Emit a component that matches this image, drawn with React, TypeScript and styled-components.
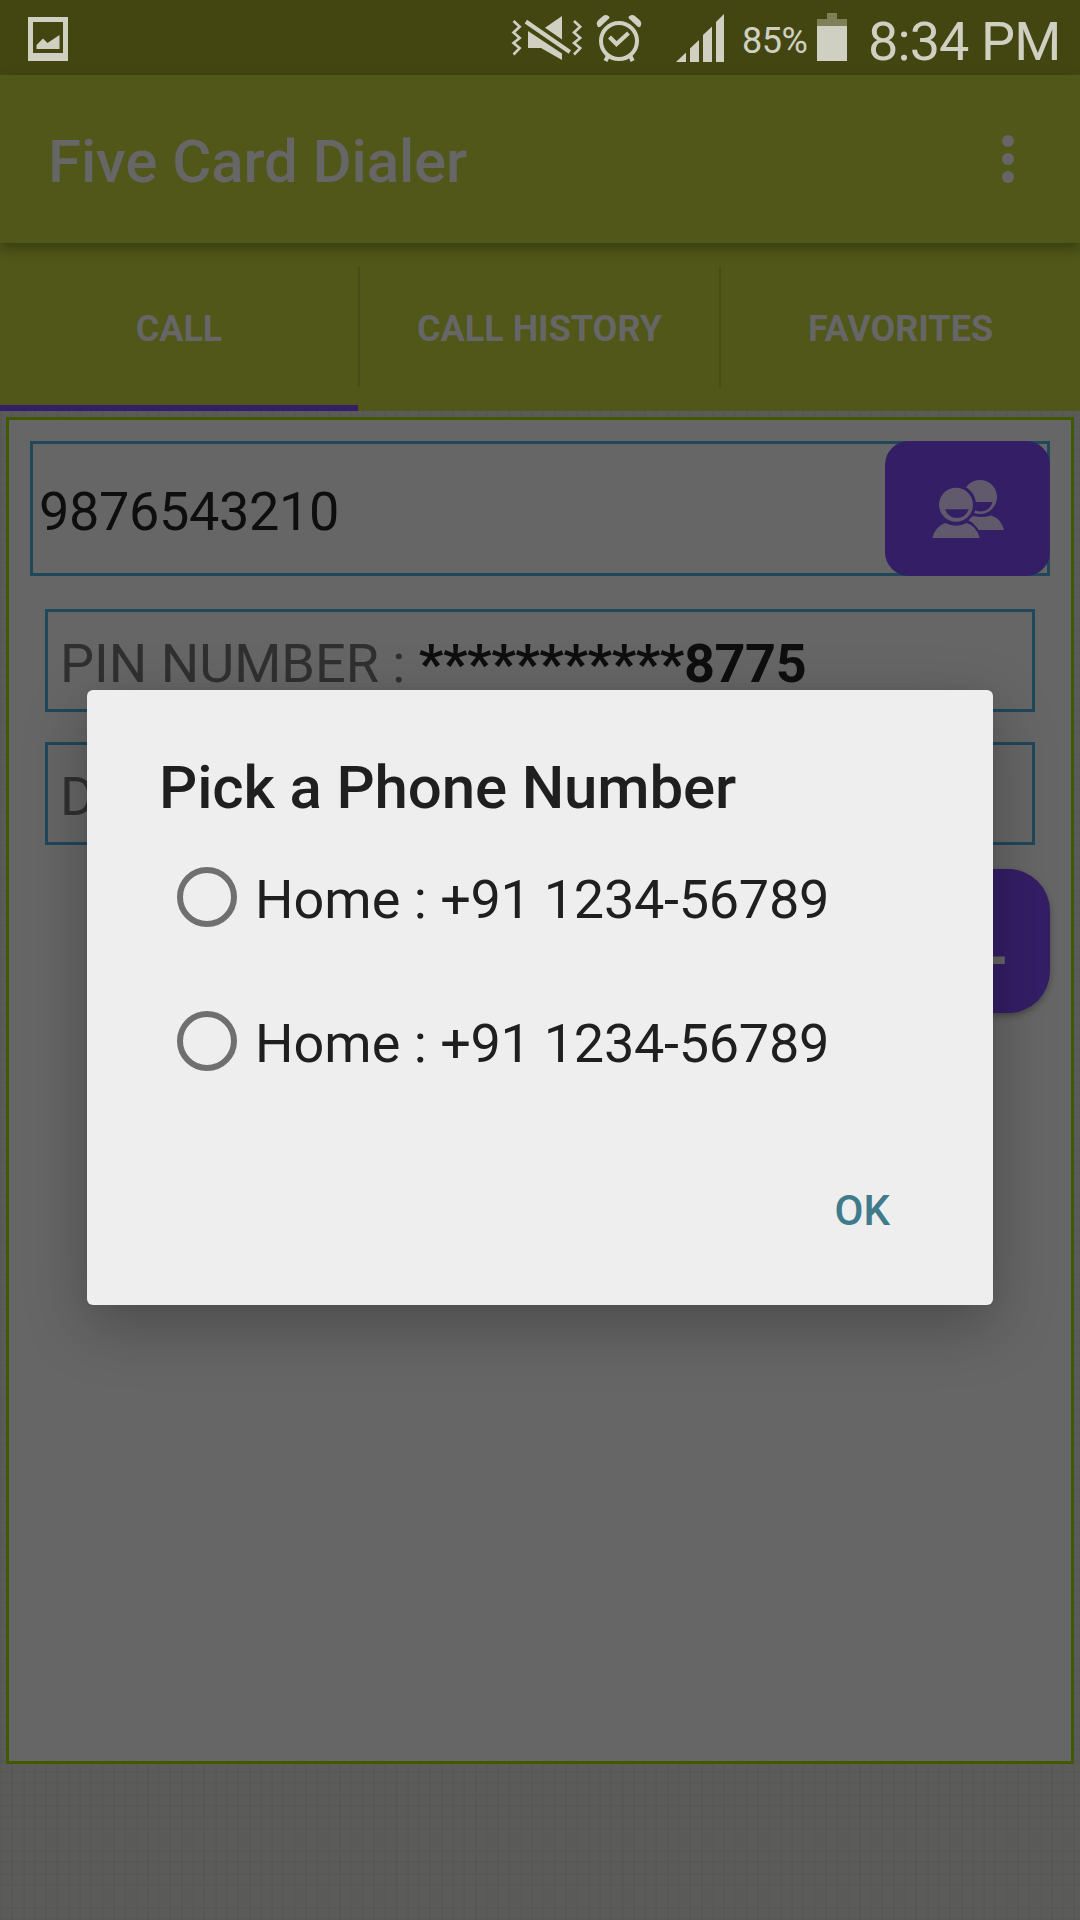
import React from "react";
import styled, { createGlobalStyle } from "styled-components";

const GlobalStyle = createGlobalStyle`
  * { box-sizing: border-box; }
  body { margin: 0; background: #5a5a58; }
`;

const ICON = "#cfcfc2";
const MUTED = "#666666";
const OLIVE = "#505718";
const PURPLE = "#341e66";

const Screen = styled.div`
  position: relative;
  width: 1080px;
  height: 1920px;
  overflow: hidden;
  display: flex;
  flex-direction: column;
  font-family: Roboto, "Noto Sans", sans-serif;
  background-color: #5b5b59;
  background-image:
    repeating-linear-gradient(90deg, rgba(0, 0, 0, 0.03) 0 2px, transparent 2px 11.3px),
    repeating-linear-gradient(0deg, rgba(0, 0, 0, 0.025) 0 2px, transparent 2px 11.3px);
`;

const StatusBar = styled.header`
  height: 75px;
  flex: none;
  display: flex;
  align-items: center;
  justify-content: space-between;
  padding-left: 28px;
  background: #444612;
  color: ${ICON};
  svg { display: block; flex: none; }
`;

const StatusIcons = styled.div`
  display: flex;
  align-items: center;
  height: 75px;
  width: 569px;
`;

const BatteryText = styled.span`
  width: 75px;
  flex: none;
  margin-left: -1px;
  padding: 6px 0 0;
  font-size: 36px;
  line-height: 42px;
  letter-spacing: -0.5px;
  white-space: nowrap;
`;

const Clock = styled.time`
  padding: 9px 0 0 21px;
  font-size: 54px;
  line-height: 64px;
  letter-spacing: -0.9px;
  white-space: nowrap;
`;

const AppBar = styled.div`
  position: relative;
  z-index: 1;
  height: 168px;
  flex: none;
  display: flex;
  align-items: center;
  justify-content: space-between;
  padding: 0 66px 0 48px;
  background: ${OLIVE};
  box-shadow: 0 5px 12px rgba(0, 0, 0, 0.32);
`;

const Title = styled.h1`
  margin: 0;
  padding-top: 6px;
  font-size: 60px;
  line-height: 70px;
  font-weight: 500;
  letter-spacing: -0.12px;
  color: ${MUTED};
`;

const Overflow = styled.div`
  display: grid;
  gap: 6px;
`;

const Dot = styled.i`
  width: 12px;
  height: 12px;
  border-radius: 50%;
  background: ${MUTED};
`;

const Tabs = styled.nav`
  height: 168px;
  flex: none;
  display: grid;
  grid-template-columns: 358px 2px 359px 2px 359px;
  background: ${OLIVE};
`;

const Tab = styled.div<{ $active?: boolean }>`
  display: flex;
  align-items: center;
  justify-content: center;
  padding: ${(p) => (p.$active ? 9 : 3)}px 0 0;
  border-bottom: ${(p) => (p.$active ? "6px solid " + PURPLE : "none")};
  font-size: 36px;
  font-weight: 700;
  color: ${MUTED};
`;

const Divider = styled.span`
  margin: 24px 0;
  background: #474d17;
`;

const Panel = styled.main`
  height: 1347px;
  margin: 6px 6px 0;
  padding: 21px;
  display: flex;
  flex-direction: column;
  border: 3px solid #3f5a00;
  background: #666666;
`;

const PhoneField = styled.div`
  position: relative;
  height: 135px;
  flex: none;
  display: flex;
  align-items: center;
  padding: 5px 0 0 6px;
  border: 3px solid #21475b;
  font-size: 54px;
  letter-spacing: -0.36px;
  color: #0e0e0e;
`;

const ContactsButton = styled.button`
  position: absolute;
  right: -3px;
  top: -3px;
  width: 165px;
  height: 135px;
  padding: 0;
  border: 0;
  border-radius: 24px;
  background: ${PURPLE};
  svg { display: block; }
`;

const InfoList = styled.div`
  display: grid;
  gap: 30px;
  margin: 33px 15px 24px;
`;

const InfoField = styled.div`
  height: 103px;
  padding: 20px 12px 0;
  border: 3px solid #21475b;
  font-size: 54px;
  line-height: 63px;
  color: #303030;
  white-space: pre;
  b {
    color: #0e0e0e;
    letter-spacing: -0.42px;
  }
`;

const CallButton = styled.button`
  align-self: flex-end;
  width: 260px;
  height: 144px;
  padding: 3px 44px 0 0;
  border: 0;
  border-radius: 42px;
  background: ${PURPLE};
  box-shadow: 0 3px 6px rgba(0, 0, 0, 0.3);
  font: 700 64px/74px Roboto, sans-serif;
  text-align: right;
  color: ${MUTED};
`;

const Dialog = styled.section`
  position: absolute;
  z-index: 2;
  left: 87px;
  top: 690px;
  width: 906px;
  height: 615px;
  padding: 63px 72px 0;
  border-radius: 6px;
  background: #eeeeee;
  color: #1f1f1f;
  box-shadow: 0 20px 62px rgba(0, 0, 0, 0.27), 0 0 12px rgba(0, 0, 0, 0.04);
`;

const DialogTitle = styled.h2`
  margin: 0;
  font-size: 60px;
  line-height: 70px;
  font-weight: 500;
  letter-spacing: -0.14px;
`;

const Options = styled.div`
  padding: 2px 0 0 18px;
`;

const Option = styled.label`
  height: 144px;
  display: flex;
  align-items: center;
  gap: 18px;
  font-size: 54px;
  line-height: 64px;
  white-space: pre;
`;

const OptionText = styled.span`
  padding-top: 5px;
`;

const PhoneNumber = styled.span`
  letter-spacing: -0.28px;
`;

const Radio = styled.i`
  width: 60px;
  height: 60px;
  flex: none;
  border: 6px solid #6f6f6f;
  border-radius: 50%;
`;

const Actions = styled.div`
  display: flex;
  justify-content: flex-end;
  padding: 73px 31px 0 0;
`;

const OkButton = styled.button`
  padding: 0;
  border: 0;
  background: none;
  font: 500 42px/50px Roboto, sans-serif;
  color: #3f7b8b;
`;

const PictureIcon = () => (
  <svg width="40" height="46" viewBox="0 -2 40 46">
    <path fill={ICON} fillRule="evenodd" d="M0 0H40V44H0ZM5 5V36H35V5Z" />
    <path fill={ICON} d="M8.5 32V28L15 21.5L19.5 26L31.5 18V32Z" />
  </svg>
);

const SystemIcons = () => (
  <svg width="232" height="75" viewBox="511 0 232 75">
    <g fill="none" stroke={ICON} strokeWidth="2.6">
      <path d="M513.5 21L519.7 26.8L513.5 32.5L519.7 38L513.5 43L519.7 48.2L513.5 54.5" />
      <path d="M574 21L580.2 26.8L574 32.5L580.2 38L574 43L580.2 48.2L574 54.5" />
    </g>
    <g fill={ICON}>
      <path d="M562 16V39.5L545 27.7Z" />
      <path d="M528 31L562 53.5V60L541 48H528Z" />
      <path d="M527 19.8L571 50.3L568.7 53.8L524.7 23.6Z" />
    </g>
    <g fill="none" stroke={ICON}>
      <circle cx="619" cy="41" r="18" strokeWidth="4" />
      <path d="M609.5 37L616.5 44L628.5 33" strokeWidth="4.2" />
      <path d="M607.7 56.5L605.5 61M630.5 56.5L632.7 61" strokeWidth="4.2" />
    </g>
    <g fill={ICON}>
      <path d="M597 25Q596 22 599 19.5L602.5 16.5Q605.5 14 608.5 16Q610.5 17.5 608.5 19L600.5 26.5Q598 28.5 597 25Z" />
      <path d="M641 25Q642 22 639 19.5L635.5 16.5Q632.5 14 629.5 16Q627.5 17.5 629.5 19L637.5 26.5Q640 28.5 641 25Z" />
      <path d="M676 62L686 52.5V62Z" />
      <path d="M690 62V48.5L699 40V62Z" />
      <path d="M703 62V35L712 26.5V62Z" />
      <path d="M716 62V22L724 14V62Z" />
    </g>
  </svg>
);

const BatteryIcon = () => (
  <svg width="30" height="49" viewBox="0 0 30 49">
    <path fill="#808058" d="M10 0H20V6H30V13H0V6H10Z" />
    <path fill={ICON} d="M0 13H30V48H0Z" />
  </svg>
);

const ContactsIcon = () => (
  <svg width="165" height="135" viewBox="885 441 165 135">
    <g fill="#605a6c">
      <circle cx="980" cy="497" r="17" />
      <path d="M960 530V523L969 517Q974 515.5 980 517Q986 517 991 515.5Q1001 518.5 1004 530Z" />
    </g>
    <path fill={PURPLE} d="M968.5 502H992.5Q990 511 980.5 511.5Q971 511 968.5 502Z" />
    <circle cx="956" cy="504.7" r="20" fill={PURPLE} />
    <path fill={PURPLE} d="M929 541Q933 525 943 520H968Q979 525 982.5 541Z" />
    <g fill="#605a6c">
      <circle cx="956" cy="504.7" r="17" />
      <path d="M932.3 538Q935.5 526 945.5 523Q950 525.7 956 525.7Q962 525.7 966.5 523Q976.5 526 979.7 538Z" />
    </g>
    <path fill={PURPLE} d="M945 509.3H968.7Q965.5 518 956.8 518Q948.5 518 945 509.3Z" />
  </svg>
);

const contacts = [
  { label: "Home", number: "+91 1234-56789" },
  { label: "Home", number: "+91 1234-56789" },
];

export default function App() {
  return (
    <Screen>
      <GlobalStyle />
      <StatusBar>
        <PictureIcon />
        <StatusIcons>
          <SystemIcons />
          <BatteryText>85%</BatteryText>
          <BatteryIcon />
          <Clock>8:34 PM</Clock>
        </StatusIcons>
      </StatusBar>
      <AppBar>
        <Title>Five Card Dialer</Title>
        <Overflow>
          <Dot />
          <Dot />
          <Dot />
        </Overflow>
      </AppBar>
      <Tabs>
        <Tab $active>CALL</Tab>
        <Divider />
        <Tab>CALL HISTORY</Tab>
        <Divider />
        <Tab>FAVORITES</Tab>
      </Tabs>
      <Panel>
        <PhoneField>
          9876543210
          <ContactsButton>
            <ContactsIcon />
          </ContactsButton>
        </PhoneField>
        <InfoList>
          <InfoField>
            PIN NUMBER : <b>***********8775</b>
          </InfoField>
          <InfoField>D</InfoField>
        </InfoList>
        <CallButton>L</CallButton>
      </Panel>
      <Dialog role="dialog">
        <DialogTitle>Pick a Phone Number</DialogTitle>
        <Options>
          {contacts.map((c, i) => (
            <Option key={i}>
              <Radio />
              <OptionText>
                {c.label} : <PhoneNumber>{c.number}</PhoneNumber>
              </OptionText>
            </Option>
          ))}
        </Options>
        <Actions>
          <OkButton>OK</OkButton>
        </Actions>
      </Dialog>
    </Screen>
  );
}
